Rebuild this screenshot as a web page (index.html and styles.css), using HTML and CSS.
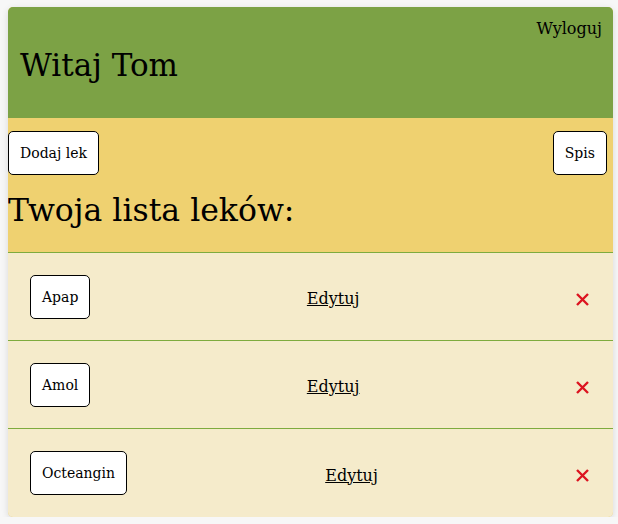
FILE: index.html
```html
<!DOCTYPE html>
<html lang="pl">
<head>
<meta charset="utf-8">
<title>Lista leków</title>
<link rel="stylesheet" href="styles.css">
</head>
<body>
<div class="card">
  <header class="header">
    <a class="logout">Wyloguj</a>
    <h1 class="greeting">Witaj Tom</h1>
  </header>
  <section class="toolbar">
    <div class="actions">
      <button class="btn">Dodaj lek</button>
      <button class="btn">Spis</button>
    </div>
    <h2 class="title">Twoja lista leków:</h2>
  </section>
  <ul class="list">
    <li class="row">
      <button class="btn">Apap</button>
      <a class="edit">Edytuj</a>
      <span class="del"><svg width="13" height="13" viewBox="0 0 13 13"><path d="M1 1L12 12M12 1L1 12" stroke="#dc1420" stroke-width="2.4" fill="none"/></svg></span>
    </li>
    <li class="row">
      <button class="btn">Amol</button>
      <a class="edit">Edytuj</a>
      <span class="del"><svg width="13" height="13" viewBox="0 0 13 13"><path d="M1 1L12 12M12 1L1 12" stroke="#dc1420" stroke-width="2.4" fill="none"/></svg></span>
    </li>
    <li class="row last">
      <button class="btn">Octeangin</button>
      <a class="edit">Edytuj</a>
      <span class="del"><svg width="13" height="13" viewBox="0 0 13 13"><path d="M1 1L12 12M12 1L1 12" stroke="#dc1420" stroke-width="2.4" fill="none"/></svg></span>
    </li>
  </ul>
</div>
</body>
</html>
```
FILE: styles.css
```css
html, body {
  margin: 0;
  padding: 0;
  background: #f7f7f7;
}
body {
  padding: 7px 5px 0 8px;
  font-family: "DejaVu Serif", serif;
  color: #000;
}
.card {
  width: 605px;
  border-radius: 5px;
  overflow: hidden;
  background: #efd170;
  box-shadow: 0 2px 7px rgba(0, 0, 0, 0.13);
}
.header {
  background: #7ca245;
  height: 111px;
  box-sizing: border-box;
  padding: 12px 11px 0 12px;
  display: flex;
  flex-direction: column;
}
.logout {
  align-self: flex-end;
  font-size: 16px;
  line-height: 19px;
}
.greeting {
  margin: 9px 0 0 0;
  font-size: 31px;
  line-height: 36px;
  font-weight: normal;
}
.toolbar {
  background: #efd170;
  padding: 13px 6px 24px 0;
}
.actions {
  display: flex;
  justify-content: space-between;
}
.btn {
  font-family: "DejaVu Serif", serif;
  font-size: 14px;
  line-height: 18px;
  padding: 12px 11px;
  border: 1px solid #000;
  border-radius: 5px;
  background: #fff;
  color: #000;
  margin: 0;
}
.title {
  margin: 17px 0 0 0;
  font-size: 31.5px;
  line-height: 36px;
  font-weight: normal;
}
.list {
  list-style: none;
  margin: 0;
  padding: 0;
  background: #f5ebcb;
}
.row {
  height: 88px;
  box-sizing: border-box;
  border-top: 1px solid #7eab3e;
  padding: 0 24px 0 22px;
  display: flex;
  align-items: center;
  justify-content: space-between;
}
.row.last {
  height: 89px;
}
.edit {
  font-size: 16px;
  line-height: 19px;
  text-decoration: underline;
  margin-top: 4px;
}
.del {
  display: flex;
  margin-top: 5px;
}
```
